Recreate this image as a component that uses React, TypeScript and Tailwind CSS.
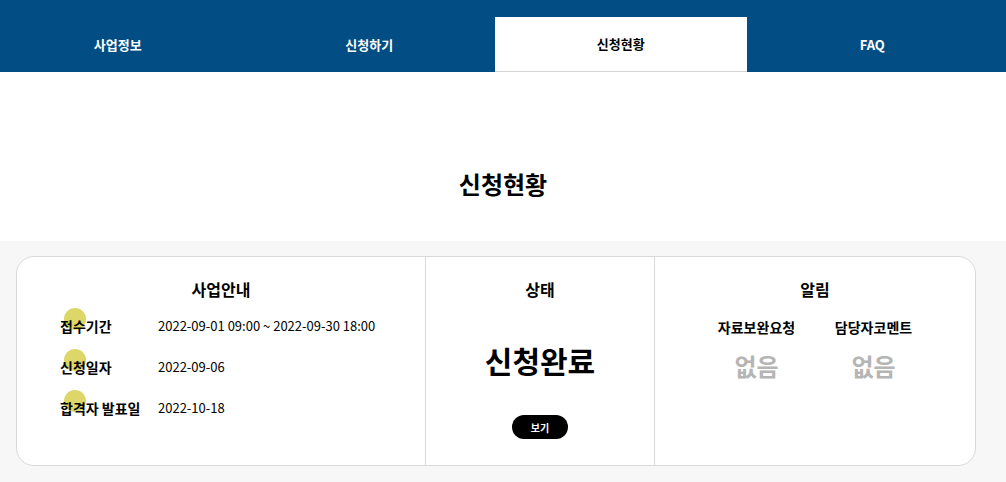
import React from "react";

const font = { fontFamily: '"Noto Sans CJK KR", "Noto Sans", sans-serif' };

const tabs = ["사업정보", "신청하기", "신청현황", "FAQ"];

function Label({ text }: { text: string }) {
  return (
    <span className="relative isolate w-[98px] shrink-0 text-[14px] font-bold leading-[20px] text-black">
      <span className="absolute left-[4px] top-[-8px] -z-10 h-[22px] w-[22px] rounded-full bg-[#ddd76a]" />
      {text}
    </span>
  );
}

export default function App() {
  return (
    <div className="min-h-[482px] w-[1006px] overflow-hidden bg-white" style={font}>
      <nav className="h-[72px] bg-[#024d83]">
        <div className="ml-[-8px] flex h-[72px] w-[1006px] items-end">
          {tabs.map((t) =>
            t === "신청현황" ? (
              <div
                key={t}
                className="flex h-[55px] flex-1 items-center justify-center border-b border-[#d4d4d4] bg-white text-[13px] font-bold text-black"
              >
                {t}
              </div>
            ) : (
              <div
                key={t}
                className="flex h-[55px] flex-1 items-center justify-center text-[13px] font-bold text-white"
              >
                {t}
              </div>
            )
          )}
        </div>
      </nav>

      <div className="flex h-[169px] items-start justify-center pt-[97px]">
        <h1 className="text-[24px] font-bold leading-[30px] text-black">신청현황</h1>
      </div>

      <section className="h-[241px] bg-[#f7f7f7] pl-[16px] pt-[15px]">
        <div className="flex h-[210px] w-[960px] rounded-[18px] border border-[#d9d9d9] bg-white">
          <div className="flex w-[409px] flex-col border-r border-[#d9d9d9] pt-[21px]">
            <h2 className="text-center text-[16px] font-bold leading-[22px] text-black">사업안내</h2>
            <div className="mt-[16px] flex flex-col gap-[21px] pl-[43px]">
              <div className="flex items-center">
                <Label text="접수기간" />
                <span className="text-[13px] leading-[20px] text-black">2022-09-01 09:00 ~ 2022-09-30 18:00</span>
              </div>
              <div className="flex items-center">
                <Label text="신청일자" />
                <span className="text-[13px] leading-[20px] text-black">2022-09-06</span>
              </div>
              <div className="flex items-center">
                <Label text="합격자 발표일" />
                <span className="text-[13px] leading-[20px] text-black">2022-10-18</span>
              </div>
            </div>
          </div>

          <div className="flex w-[229px] flex-col items-center border-r border-[#d9d9d9] pt-[21px]">
            <h2 className="text-[16px] font-bold leading-[22px] text-black">상태</h2>
            <div className="mt-[40px] text-[30px] font-bold leading-[40px] text-black">신청완료</div>
            <button className="mt-[35px] flex h-[24px] w-[56px] items-center justify-center rounded-full bg-black text-[10px] font-bold text-white">
              보기
            </button>
          </div>

          <div className="flex flex-1 flex-col items-center pt-[21px]">
            <h2 className="text-[16px] font-bold leading-[22px] text-black">알림</h2>
            <div className="mt-[17px] flex gap-[38px]">
              <div className="flex w-[79px] flex-col items-center">
                <span className="whitespace-nowrap text-[14px] font-bold leading-[20px] text-black">자료보완요청</span>
                <span className="mt-[14px] text-[24px] font-bold leading-[30px] text-[#b5b5b5]">없음</span>
              </div>
              <div className="flex w-[79px] flex-col items-center">
                <span className="whitespace-nowrap text-[14px] font-bold leading-[20px] text-black">담당자코멘트</span>
                <span className="mt-[14px] text-[24px] font-bold leading-[30px] text-[#b5b5b5]">없음</span>
              </div>
            </div>
          </div>
        </div>
      </section>
    </div>
  );
}
